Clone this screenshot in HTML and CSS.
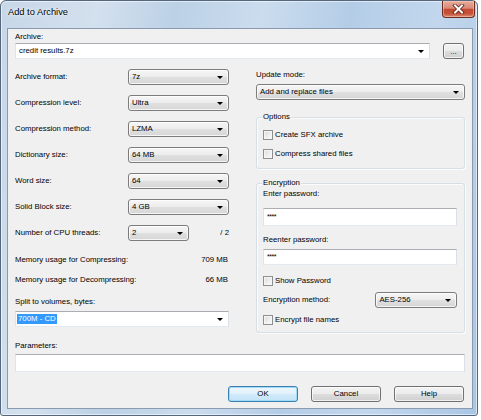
FILE: index.html
```html
<!DOCTYPE html>
<html>
<head>
<meta charset="utf-8">
<title>Add to Archive</title>
<link rel="stylesheet" href="styles.css">
</head>
<body>
<div class="window">
  <div class="titlebar">
    <span class="title">Add to Archive</span>
    <div class="close">
      <svg width="13" height="10" viewBox="0 0 13 10">
        <path d="M3 1.5 L10 8.5 M10 1.5 L3 8.5" stroke="#5a1d12" stroke-width="3.6" stroke-linecap="square"/>
        <path d="M3 1.5 L10 8.5 M10 1.5 L3 8.5" stroke="#ffffff" stroke-width="2" stroke-linecap="square"/>
      </svg>
    </div>
  </div>
  <div class="client">
    <div class="lbl archive-lbl">Archive:</div>
    <div class="archive-row">
      <div class="ecombo archive-combo"><span>credit results.7z</span><i class="arrow"></i></div>
      <div class="btn browse">...</div>
    </div>
    <div class="columns">
      <div class="left">
        <div class="frow"><span class="flbl">Archive format:</span><div class="combo"><span>7z</span><i class="arrow"></i></div></div>
        <div class="frow"><span class="flbl">Compression level:</span><div class="combo"><span>Ultra</span><i class="arrow"></i></div></div>
        <div class="frow"><span class="flbl">Compression method:</span><div class="combo"><span>LZMA</span><i class="arrow"></i></div></div>
        <div class="frow"><span class="flbl">Dictionary size:</span><div class="combo"><span>64 MB</span><i class="arrow"></i></div></div>
        <div class="frow"><span class="flbl">Word size:</span><div class="combo"><span>64</span><i class="arrow"></i></div></div>
        <div class="frow"><span class="flbl">Solid Block size:</span><div class="combo"><span>4 GB</span><i class="arrow"></i></div></div>
        <div class="frow"><span class="flbl">Number of CPU threads:</span><div class="combo cpu"><span>2</span><i class="arrow"></i></div><span class="of">/ 2</span></div>
        <div class="mrow first"><span>Memory usage for Compressing:</span><span>709 MB</span></div>
        <div class="mrow"><span>Memory usage for Decompressing:</span><span>66 MB</span></div>
        <div class="lbl split-lbl">Split to volumes, bytes:</div>
        <div class="ecombo split"><span class="sel">700M - CD</span><i class="arrow"></i></div>
      </div>
      <div class="right">
        <div class="lbl update-lbl">Update mode:</div>
        <div class="combo wide"><span>Add and replace files</span><i class="arrow"></i></div>
        <div class="group options">
          <div class="gtitle">Options</div>
          <div class="cbrow cb1"><i class="cb"></i><span>Create SFX archive</span></div>
          <div class="cbrow cb2"><i class="cb"></i><span>Compress shared files</span></div>
        </div>
        <div class="group encryption">
          <div class="gtitle">Encryption</div>
          <div class="lbl pw1-lbl">Enter password:</div>
          <div class="field pw1">****</div>
          <div class="lbl pw2-lbl">Reenter password:</div>
          <div class="field pw2">****</div>
          <div class="cbrow showpw"><i class="cb"></i><span>Show Password</span></div>
          <div class="frow encrow"><span class="elbl">Encryption method:</span><div class="combo enc"><span>AES-256</span><i class="arrow"></i></div></div>
          <div class="cbrow encnames"><i class="cb"></i><span>Encrypt file names</span></div>
        </div>
      </div>
    </div>
    <div class="lbl params-lbl">Parameters:</div>
    <div class="field params"></div>
    <div class="buttons">
      <div class="btn default">OK</div>
      <div class="btn">Cancel</div>
      <div class="btn">Help</div>
    </div>
  </div>
</div>
</body>
</html>
```

FILE: styles.css
```css
* { box-sizing: border-box; }
html, body { margin: 0; padding: 0; background: #ffffff; }
body {
  font-family: "Liberation Sans", Arial, sans-serif;
  font-size: 7.8px;
  line-height: 10px;
  color: #000;
}

.window {
  width: 478px;
  height: 416px;
  border: 1px solid #55677c;
  border-radius: 6px 6px 3px 3px;
  padding: 0 4px 6px 6px;
  display: flex;
  flex-direction: column;
  background: linear-gradient(100deg, #c7d7e8 0%, #d3e0ee 18%, #bcd1e6 32%, #cbdcee 48%, #b4cde7 64%, #c2d7ed 80%, #a9c6e5 100%);
  box-shadow: inset 0 0 0 1px rgba(255,255,255,0.55);
}

.titlebar {
  height: 27px;
  display: flex;
  align-items: flex-start;
  flex-shrink: 0;
}
.title {
  font-size: 9.3px;
  line-height: 12px;
  margin-top: 5px;
  margin-left: 1px;
  color: #000;
  text-shadow: 0 0 4px rgba(255,255,255,0.9), 0 0 2px rgba(255,255,255,0.9);
}
.close {
  margin-left: auto;
  margin-right: -2px;
  width: 33px;
  height: 17px;
  border: 1px solid #6e2b20;
  border-top: none;
  border-radius: 0 0 4px 4px;
  background: linear-gradient(#e8ab9c 0%, #d98a77 45%, #c54a31 52%, #c45237 78%, #dc8a70 100%);
  box-shadow: inset 0 0 0 1px rgba(255,220,210,0.45);
  display: flex;
  align-items: center;
  justify-content: center;
}

.client {
  flex: 1;
  background: #f0f0f0;
  border: 1px solid #8a9bb0;
  padding: 0 7px;
  display: flex;
  flex-direction: column;
}

.lbl { height: 10px; white-space: nowrap; }
.archive-lbl { margin-top: 3px; }

.archive-row {
  margin-top: 1px;
  display: flex;
  height: 16px;
}
.archive-combo { flex: 1; }

.combo, .ecombo {
  height: 16px;
  display: flex;
  align-items: center;
  padding-left: 3px;
  white-space: nowrap;
}
.combo {
  border: 1px solid #7c7c7c;
  border-radius: 3px;
  background: linear-gradient(#f6f6f6 0%, #ececec 50%, #e0e0e0 51%, #d6d6d6 100%);
  box-shadow: inset 0 0 0 1px rgba(255,255,255,0.75);
}
.ecombo {
  background: #fff;
  border: 1px solid;
  border-color: #abadb3 #dbdfe6 #e3e9ef #e2e3ea;
}
.arrow {
  margin-left: auto;
  margin-right: 5px;
  width: 0;
  height: 0;
  border-left: 3px solid transparent;
  border-right: 3px solid transparent;
  border-top: 3.5px solid #000;
}

.columns {
  display: flex;
  gap: 27px;
}
.left { width: 214px; padding-top: 10px; display: flex; flex-direction: column; }
.right { width: 209px; display: flex; flex-direction: column; }

.frow {
  display: flex;
  align-items: center;
  height: 16px;
  margin-bottom: 10px;
  white-space: nowrap;
}
.flbl { width: 113px; }
.left .combo { width: 101px; }
.left .combo.cpu { width: 61px; }
.of { margin-left: auto; margin-right: 0; }

.mrow {
  display: flex;
  justify-content: space-between;
  align-items: center;
  height: 16px;
  padding-right: 1px;
  white-space: nowrap;
}
.mrow.first { margin-top: 1px; margin-bottom: 4px; }
.split-lbl { margin-top: 9px; }
.split { margin-top: 4px; padding-left: 1px; }
.sel { background: #3399ff; color: #fff; padding: 0 1px; line-height: 10px; }

.update-lbl { margin-top: 11px; }
.combo.wide { margin-top: 4px; }

.group {
  border: 1px solid #d5dfe5;
  border-radius: 3px;
  box-shadow: inset 1px 1px 0 #fcfcfc, 1px 1px 0 #fcfcfc;
  padding: 0 7px 0 6px;
  display: flex;
  flex-direction: column;
}
.gtitle {
  margin-top: -6px;
  margin-left: -1px;
  padding: 0 1px;
  height: 10px;
  width: fit-content;
  background: #f0f0f0;
}
.options { margin-top: 17px; padding-bottom: 9px; }
.cbrow {
  display: flex;
  align-items: center;
  height: 10px;
  white-space: nowrap;
}
.cb1 { margin-top: 8px; }
.cb2 { margin-top: 9px; }
.cb {
  width: 10px;
  height: 10px;
  border: 1px solid #8e8f8f;
  background: linear-gradient(135deg, #d9d9d9 0%, #f0f0f0 60%, #fbfbfb 100%);
  box-shadow: inset 0 0 0 1px #f6f6f6;
  margin-right: 2px;
  flex-shrink: 0;
}

.encryption { margin-top: 14px; padding-bottom: 7px; }
.pw1-lbl { margin-top: 1px; }
.field {
  background: #fff;
  border: 1px solid;
  border-color: #abadb3 #dbdfe6 #e3e9ef #e2e3ea;
  padding-left: 3px;
  display: flex;
  align-items: center;
  font-size: 7px;
  letter-spacing: -0.5px;
}
.pw1 { height: 18px; margin-top: 9px; }
.pw2-lbl { margin-top: 9px; }
.pw2 { height: 16px; margin-top: 4px; }
.showpw { margin-top: 11px; }
.encrow { margin-top: 6px; margin-bottom: 0; }
.elbl { width: 113px; }
.combo.enc { width: 82px; margin-left: auto; }
.encnames { margin-top: 7px; }

.params-lbl { margin-top: 8px; }
.params { height: 18px; margin-top: 3px; }

.buttons {
  display: flex;
  justify-content: flex-end;
  gap: 13px;
  margin-top: 14px;
  padding-right: 1px;
}
.btn {
  width: 70px;
  height: 16px;
  border: 1px solid #707070;
  border-radius: 3px;
  background: linear-gradient(#f3f3f3 0%, #ebebeb 50%, #dddddd 51%, #d0d0d0 100%);
  box-shadow: inset 0 0 0 1px rgba(255,255,255,0.7);
  display: flex;
  align-items: center;
  justify-content: center;
  white-space: nowrap;
}
.btn.browse {
  width: 21px;
  margin-left: 13px;
  margin-right: 1px;
  padding-top: 2px;
}
.btn.default {
  border-color: #3c7fb1;
  background: linear-gradient(#eef7fc 0%, #e1f1fb 50%, #d0eaf9 51%, #c4e4f7 100%);
  box-shadow: inset 0 0 0 1px #9fdbf7;
}
```
